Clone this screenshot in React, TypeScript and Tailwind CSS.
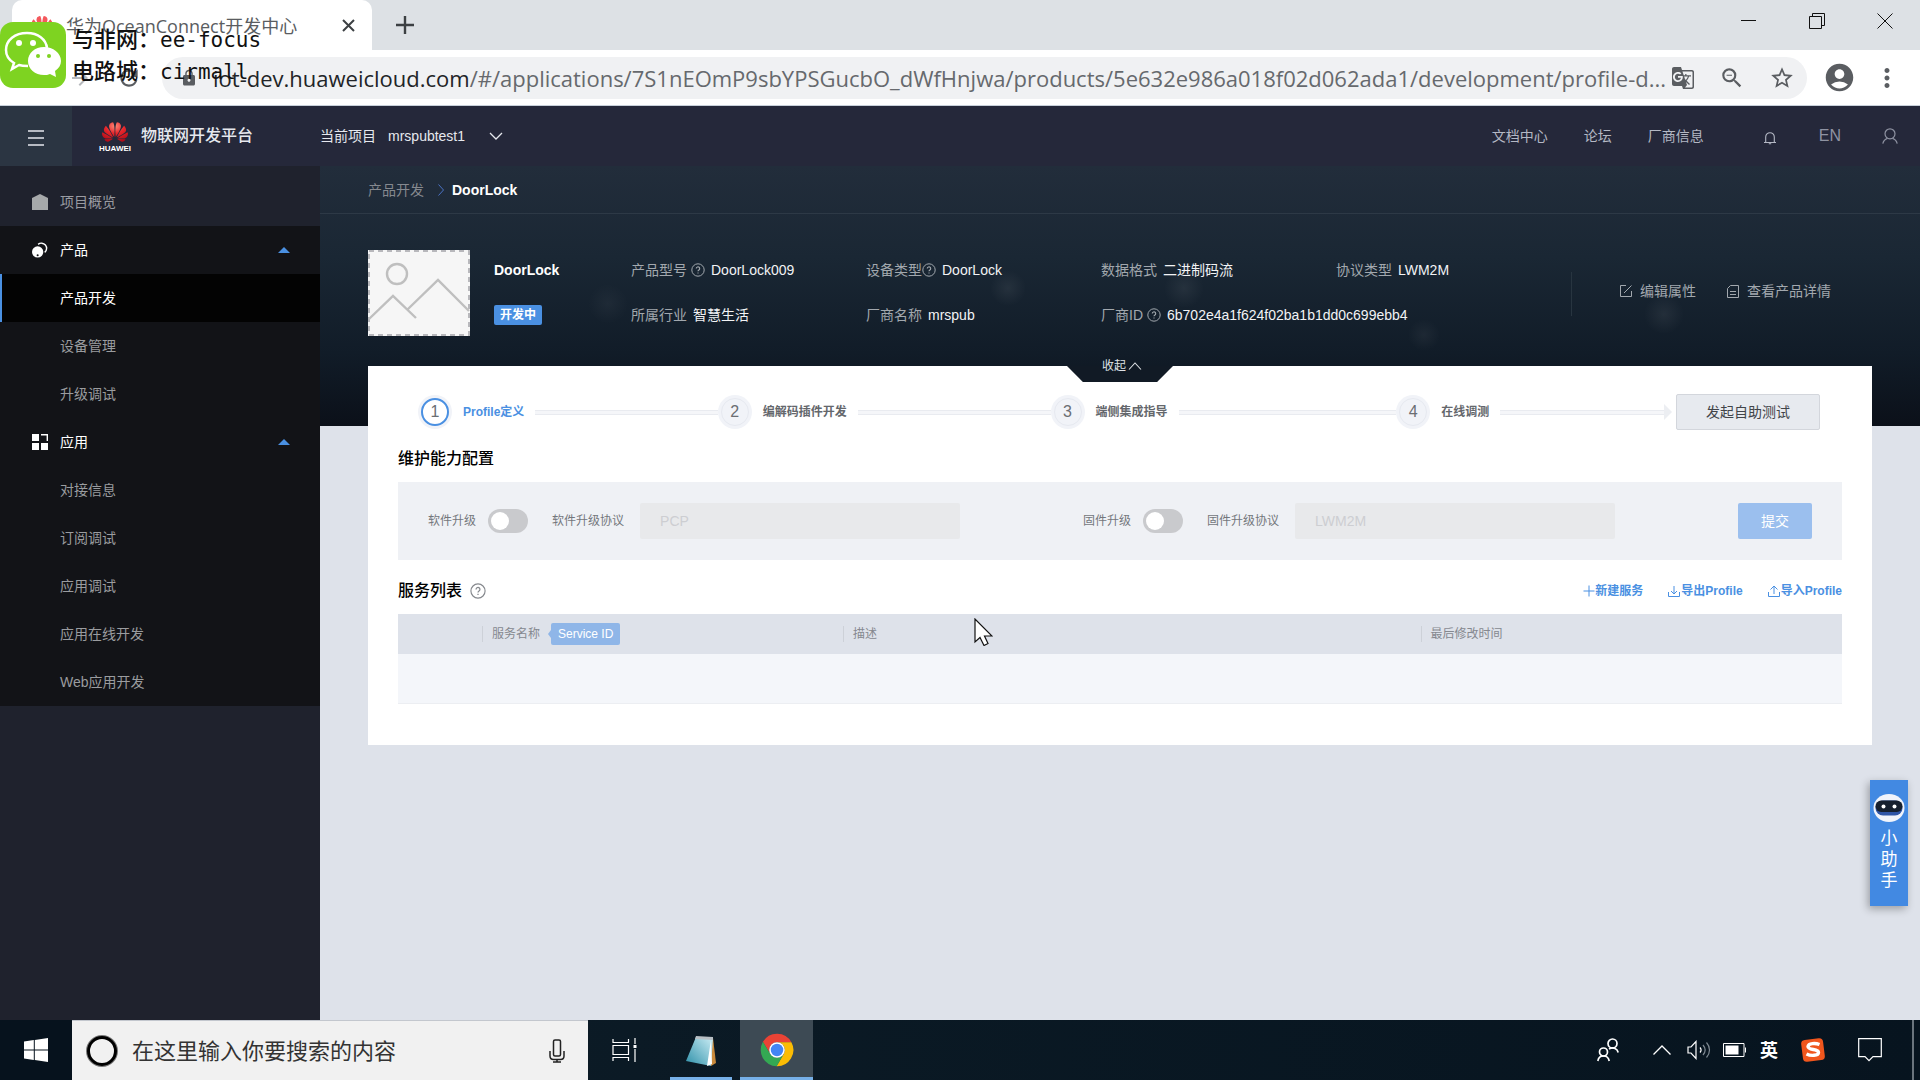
import type { ReactNode } from 'react'
import {
  MdAccountCircle,
  MdArrowForward,
  MdGTranslate,
  MdLock,
  MdMoreVert,
  MdRefresh,
  MdStarBorder,
  MdZoomOut,
} from 'react-icons/md'
import { SiHuawei } from 'react-icons/si'

const LATIN_FONT = "font-['Liberation_Sans','Noto_Sans_CJK_SC',sans-serif]"
const CHROME_FONT = "font-['Open_Sans','Noto_Sans_CJK_SC',sans-serif]"

const PRODUCT_ITEMS = [
  { label: '产品开发', active: true },
  { label: '设备管理' },
  { label: '升级调试' },
]

const APP_ITEMS = [
  { label: '对接信息' },
  { label: '订阅调试' },
  { label: '应用调试' },
  { label: '应用在线开发' },
  { label: 'Web应用开发' },
]

const PRODUCT_INFO = [
  { label: '产品型号', value: 'DoorLock009', help: 'ml-1' },
  { label: '设备类型', value: 'DoorLock', help: 'ml-0' },
  { label: '数据格式', value: '二进制码流' },
  { label: '协议类型', value: 'LWM2M' },
  { label: '所属行业', value: '智慧生活' },
  { label: '厂商名称', value: 'mrspub' },
  { label: '厂商ID', value: '6b702e4a1f624f02ba1b1dd0c699ebb4', help: 'ml-1' },
]

const STEPS = [
  { label: 'Profile定义', grow: 'grow-[300]', active: true },
  { label: '编解码插件开发', grow: 'grow-[333]' },
  { label: '端侧集成指导', grow: 'grow-[346]' },
  { label: '在线调测', grow: 'grow-[280]', last: true },
]

function HelpIcon({ className }: { className: string }) {
  return (
    <svg viewBox="0 0 14 14" fill="none" stroke="currentColor" className={className}>
      <circle cx="7" cy="7" r="6.2" />
      <path d="M5.3 5.6a1.7 1.7 0 1 1 2.6 1.4c-.6.4-.9.7-.9 1.3M7 9.4v1.1" strokeWidth="1.1" />
    </svg>
  )
}

function PetalGradient() {
  return (
    <svg width="0" height="0" className="absolute">
      <defs>
        <radialGradient id="petal" cx="50%" cy="20%" r="80%">
          <stop offset="0" stopColor="#ff8a78" />
          <stop offset="0.45" stopColor="#e8262b" />
          <stop offset="1" stopColor="#b00d18" />
        </radialGradient>
      </defs>
    </svg>
  )
}

/* ---------- browser frame ---------- */

function TabStrip() {
  return (
    <div className="flex h-[50px] justify-between bg-[#dde1e5]">
      <div className="flex items-center pl-3">
        <div className="flex h-full w-[360px] items-center rounded-t-[10px] bg-white pl-[18px] pr-4">
          <SiHuawei className="size-6 shrink-0 text-[#f4585c]" />
          <span className="ml-3 flex-1 whitespace-nowrap pt-0.5 text-lg text-[#5a5d61]">
            华为OceanConnect开发中心
          </span>
          <button aria-label="关闭标签页" className="text-[#3c4043]">
            <svg viewBox="0 0 16 16" className="size-4" stroke="currentColor" strokeWidth="2">
              <path d="M3 3l11 11M14 3L3 14" />
            </svg>
          </button>
        </div>
        <button aria-label="新建标签页" className="ml-6 text-[#3c4043]">
          <svg viewBox="0 0 18 18" className="size-[18px]" stroke="currentColor" strokeWidth="2.4">
            <path d="M9 0v18M0 9h18" />
          </svg>
        </button>
      </div>
      <div className="flex h-[42px] items-center gap-[52px] pr-[27px] text-[#111]">
        <button aria-label="最小化">
          <svg viewBox="0 0 16 16" className="size-4" stroke="currentColor" fill="none">
            <path d="M0 7.5h15" />
          </svg>
        </button>
        <button aria-label="还原">
          <svg viewBox="0 0 16 16" className="size-4" stroke="currentColor" fill="none">
            <path d="M.5 3.5h12v12H.5zM3.5 3.5v-3h12v12h-3" />
          </svg>
        </button>
        <button aria-label="关闭">
          <svg viewBox="0 0 16 16" className="size-4" stroke="currentColor" fill="none">
            <path d="M.5.5l15 15M15.5.5l-15 15" />
          </svg>
        </button>
      </div>
    </div>
  )
}

function AddressBar() {
  return (
    <div className="flex h-14 items-center border-b border-[#c8d0da] bg-white pr-[18px] text-[#5a5d61]">
      <button aria-label="前进" className="ml-[68px] text-[#b5b8bc]">
        <MdArrowForward className="size-6" />
      </button>
      <button aria-label="重新加载" className="ml-6">
        <MdRefresh className="size-[26px]" />
      </button>
      <div className="ml-5 flex h-[42px] min-w-0 flex-1 items-center rounded-full bg-[#f0f1f3] pl-[18px] pr-3">
        <MdLock className="size-[18px] shrink-0" />
        <span className="ml-[15px] min-w-0 flex-1 whitespace-nowrap text-[22px] leading-8 text-[#66696d]">
          <span className="text-[#222427]">iot-dev.huaweicloud.com</span>
          /#/applications/7S1nEOmP9sbYPSGucbO_dWfHnjwa/products/5e632e986a018f02d062ada1/development/profile-d...
        </span>
        <div className="flex shrink-0 items-center gap-[24px]">
          <button aria-label="翻译">
            <MdGTranslate className="size-6" />
          </button>
          <button aria-label="缩放">
            <MdZoomOut className="size-[26px]" />
          </button>
          <button aria-label="收藏">
            <MdStarBorder className="size-[26px]" />
          </button>
        </div>
      </div>
      <button aria-label="用户" className="ml-4">
        <MdAccountCircle className="size-[33px]" />
      </button>
      <button aria-label="更多" className="ml-4">
        <MdMoreVert className="size-[30px]" />
      </button>
    </div>
  )
}

function Watermark() {
  return (
    <div className="absolute left-0 top-[22px] flex items-center gap-1.5 text-[#111]">
      <svg viewBox="0 0 66 66" className="size-[66px]">
        <rect width="66" height="66" rx="13" fill="#7ed321" />
        <path
          d="M27 11C15 11 6 18 6 28c0 6 3 10 8 13l-2 6 7-4c3 1 5 1 9 1"
          fill="none"
          stroke="#fff"
          strokeWidth="2.5"
        />
        <path d="M27 11c11 0 19 6 20 15" fill="none" stroke="#fff" strokeWidth="2.5" />
        <circle cx="19" cy="21" r="3" fill="#fff" />
        <circle cx="33" cy="21" r="3" fill="#fff" />
        <path
          d="M44 25c9 0 17 6 17 14 0 4-2 7-6 10l1 6-6-3c-2 1-4 1-6 1-9 0-16-6-16-14s7-14 16-14z"
          fill="#fff"
        />
        <circle cx="38" cy="34" r="2" fill="#7ed321" />
        <circle cx="49" cy="34" r="2" fill="#7ed321" />
      </svg>
      <div className="font-['Noto_Sans_CJK_SC',sans-serif] text-[22px] font-medium leading-[29px] whitespace-nowrap">
        <p>
          与非网：<span className="font-['DejaVu_Sans_Mono',monospace] text-[21px]">ee-focus</span>
        </p>
        <p>
          电路城：<span className="font-['DejaVu_Sans_Mono',monospace] text-[21px]">cirmall</span>
        </p>
      </div>
    </div>
  )
}

/* ---------- console header and sidebar ---------- */

function ConsoleHeader() {
  return (
    <header className="flex h-[60px] shrink-0 items-center bg-[#25283a] text-sm text-[#e6e8ee]">
      <button
        aria-label="菜单"
        className="flex h-full w-[72px] items-center justify-center bg-[#2b3542]"
      >
        <svg viewBox="0 0 16 16" className="mt-1 size-4" stroke="#e6e8ee" strokeWidth="1.3">
          <path d="M0 1h16M0 8h16M0 15h16" />
        </svg>
      </button>
      <div className="ml-[27px] flex w-8 flex-col items-center">
        <SiHuawei className="h-[26px] w-8" style={{ fill: 'url(#petal)' }} />
        <span className="text-[8px] font-bold leading-2 text-white">HUAWEI</span>
      </div>
      <h1 className="ml-[10px] text-base font-medium">物联网开发平台</h1>
      <span className="ml-[67px]">当前项目</span>
      <button className="ml-3 flex items-center gap-6">
        mrspubtest1
        <svg viewBox="0 0 14 8" className="h-2 w-3.5" fill="none" stroke="currentColor" strokeWidth="1.3">
          <path d="M1 1l6 6 6-6" />
        </svg>
      </button>
      <nav className="ml-auto flex items-center pr-[22px] text-[#b4b8c4]">
        <a href="#docs">文档中心</a>
        <a href="#forum" className="ml-9">论坛</a>
        <a href="#vendor" className="ml-9">厂商信息</a>
        <button aria-label="通知" className="ml-[59px]">
          <svg viewBox="0 0 14 14" className="mt-1 size-3.5" fill="none" stroke="currentColor" strokeWidth="1.1">
            <path d="M1 11.5h12M2.7 11.5V6a4.3 4.3 0 0 1 8.6 0v5.5M5.8 12.8h2.4" />
          </svg>
        </button>
        <button className="ml-[42px] text-base text-[#8f93a2]">EN</button>
        <button aria-label="账号" className="ml-[41px]">
          <svg viewBox="0 0 16 16" className="size-4" fill="none" stroke="#8f93a2" strokeWidth="1.2">
            <circle cx="8" cy="5.8" r="5" />
            <path d="M.8 15.6c.6-2.8 2.4-4.4 4.6-5.2M15.2 15.6c-.6-2.8-2.4-4.4-4.6-5.2" />
          </svg>
        </button>
      </nav>
    </header>
  )
}

function GroupHeading({ icon, label }: { icon: ReactNode; label: string }) {
  return (
    <button className="flex h-12 w-full items-center pl-8 pr-[30px] text-left text-white">
      {icon}
      <span className="ml-3 flex-1">{label}</span>
      <svg viewBox="0 0 12 6" className="h-1.5 w-3" fill="#4a90e2">
        <path d="M6 0l6 6H0z" />
      </svg>
    </button>
  )
}

function MenuLink({ label, active }: { label: string; active?: boolean }) {
  return (
    <a
      href="#menu"
      className={`flex h-12 items-center border-l-2 pl-[58px] ${
        active ? 'border-[#4a90e2] bg-[#030303] text-white' : 'border-transparent text-[#9a9c9f]'
      }`}
    >
      {label}
    </a>
  )
}

function Sidebar() {
  return (
    <aside className="w-80 shrink-0 bg-[#1f222d] pt-3 text-sm">
      <a href="#overview" className="flex h-12 items-center gap-3 pl-8 text-[#9a9ca2]">
        <svg viewBox="0 0 16 16" className="size-4" fill="#a6a9aa">
          <path d="M8 0l8 4v12H0V4z" />
        </svg>
        项目概览
      </a>
      <nav className="bg-[#121317]">
        <GroupHeading
          label="产品"
          icon={
            <svg viewBox="0 0 17 17" className="size-4">
              <path d="M6.500 2.500A5 5 0 1 1 13.500 11" fill="none" stroke="#fff" strokeWidth="1.500" />
              <circle cx="6" cy="10.500" r="6" fill="#fff" />
              <circle cx="6" cy="14" r="1.100" fill="#121317" />
            </svg>
          }
        />
        {PRODUCT_ITEMS.map((item) => (
          <MenuLink key={item.label} {...item} />
        ))}
        <GroupHeading
          label="应用"
          icon={
            <svg viewBox="0 0 16 16" className="size-4" fill="#fff">
              <path d="M0 0h7v7H0zM0 9h7v7H0zM9 9h7v7H9z" />
              <path d="M9 .7h6.3V7" fill="none" stroke="#fff" strokeWidth="1.4" />
            </svg>
          }
        />
        {APP_ITEMS.map((item) => (
          <MenuLink key={item.label} {...item} />
        ))}
      </nav>
    </aside>
  )
}

/* ---------- product page ---------- */

function ProductHero() {
  return (
    <section className="bg-[radial-gradient(circle_at_43%_47%,#ffffff10_0,transparent_18px),radial-gradient(circle_at_54%_47%,#ffffff10_0,transparent_20px),radial-gradient(circle_at_84%_57%,#ffffff10_0,transparent_20px),radial-gradient(circle_at_69%_65%,#ffffff0c_0,transparent_16px),radial-gradient(circle_at_18%_53%,#ffffff0a_0,transparent_20px),linear-gradient(to_bottom,#222d3b_0%,#1a2734_35%,#111c28_72%,#0b1019_100%)] pb-[90px] text-sm">
      <nav className="flex h-12 items-center border-b border-[#2d3946] pl-12">
        <a href="#products" className="text-[#85898f]">产品开发</a>
        <svg viewBox="0 0 6 12" className="ml-3.5 mr-2 h-3 w-1.5" fill="none" stroke="#4a72c4">
          <path d="M.5.5L5.5 6l-5 5.5" />
        </svg>
        <span className="font-bold text-white">DoorLock</span>
      </nav>
      <div className="flex items-start px-12 pt-9">
        <svg viewBox="0 0 102 86" className="h-[86px] w-[102px]" fill="none">
          <path d="M0 0h102v86H0z" fill="#f6f6f6" />
          <path d="M1 1h100v84H1z" stroke="#b8b8bc" strokeWidth="2" strokeDasharray="5 4" />
          <g stroke="#bfbfbf" strokeWidth="2.4">
            <circle cx="29" cy="24" r="10" />
            <path d="M1 69l24-23 23 22M40 59l30-29 31 31" />
          </g>
        </svg>
        <div className="ml-6 w-[137px] shrink-0 pt-2.5">
          <h2 className="font-bold leading-5 text-white">DoorLock</h2>
          <span className="mt-[25px] inline-block rounded-[2px] bg-[#4a90e2] px-1.5 text-xs font-bold leading-5 text-white">
            开发中
          </span>
        </div>
        <dl className="grid grow grid-cols-4 gap-y-[25px] pt-2.5 leading-5">
          {PRODUCT_INFO.map((info) => (
            <div key={info.label} className="flex w-0 items-center whitespace-nowrap">
              <dt className="flex items-center text-[#a2a8ae]">
                {info.label}
                {info.help && (
                  <span className={info.help}>
                    <HelpIcon className="size-3.5" />
                  </span>
                )}
              </dt>
              <dd className="ml-1.5 text-[#f2f3f5]">{info.value}</dd>
            </div>
          ))}
        </dl>
        <div className="mt-[22px] flex h-11 shrink-0 items-center border-l border-[#283540] pb-1.5 pl-12 pr-[41px] text-[#a2a8ae]">
          <button className="flex items-center gap-2">
            <svg viewBox="0 0 12 12" className="size-3" fill="none" stroke="currentColor">
              <path d="M6 .5H.5v11h11V6M4 8l7.5-7.5" />
            </svg>
            编辑属性
          </button>
          <button className="ml-[31px] flex items-center gap-2">
            <svg viewBox="0 0 12 13" className="h-[13px] w-3" fill="none" stroke="currentColor">
              <path d="M3.5.5h8v12H.5v-9zM3 6.5h6M3 9.5h6" />
            </svg>
            查看产品详情
          </button>
        </div>
      </div>
    </section>
  )
}

function Steps() {
  return (
    <div className="flex items-center pl-5 pr-[22px]">
      <ol className="flex grow items-center">
        {STEPS.map((step, i) => (
          <li key={step.label} className={`flex basis-0 items-center ${step.grow}`}>
            <span className="shrink-0 rounded-full bg-[#f1f3f8] p-[3px]">
              <span
                className={`flex size-7 items-center justify-center rounded-full text-base text-[#6b6e73] ${
                  step.active ? 'border-2 border-[#4a90e2] bg-white' : 'border border-[#e6e9f0]'
                }`}
              >
                {i + 1}
              </span>
            </span>
            <span
              className={`mx-[11px] shrink-0 whitespace-nowrap text-xs font-bold ${
                step.active ? 'text-[#4a90e2]' : 'text-[#64676c]'
              }`}
            >
              {step.label}
            </span>
            <span className="h-[5px] grow border-y border-[#e9ebf0] bg-[#f5f6f9]" />
            {step.last && (
              <svg viewBox="0 0 8 16" className="mr-1 h-4 w-2" fill="#eceef2">
                <path d="M0 0l8 8-8 8z" />
              </svg>
            )}
          </li>
        ))}
      </ol>
      <button className="h-9 w-36 rounded-[2px] border border-[#d3d6dc] bg-[#e7eaef] text-sm text-[#414449]">
        发起自助测试
      </button>
    </div>
  )
}

function UpgradeSetting({ id, label, protocol }: { id: string; label: string; protocol: string }) {
  return (
    <div className="flex w-[655px] items-center">
      <label htmlFor={id}>{label}</label>
      <span className="relative ml-3 h-6 w-10">
        <input
          id={id}
          type="checkbox"
          className="peer size-full appearance-none rounded-full bg-[#c9cacd]"
        />
        <span className="pointer-events-none absolute left-[3px] top-[3px] size-[18px] rounded-full bg-white peer-checked:left-[19px]" />
      </span>
      <label htmlFor={`${id}-protocol`} className="ml-6">
        {label}协议
      </label>
      <input
        id={`${id}-protocol`}
        disabled
        value={protocol}
        className="ml-4 h-9 w-80 rounded-[2px] bg-[#e8e9eb] px-5 text-sm text-[#cdced2]"
      />
    </div>
  )
}

function ServiceTable() {
  return (
    <table className="w-full table-fixed text-left text-xs">
      <thead>
        <tr className="h-10 bg-[#dee2ea] text-[#85888f]">
          <th className="w-[84px]" />
          <th className="w-[25%] font-normal">
            <span className="flex items-center">
              <span className="border-l border-[#cdd1d8] pl-[9px]">服务名称</span>
              <svg viewBox="0 0 3 8" className="ml-2 h-2 w-[3px]" fill="#8fb6e8">
                <path d="M3 0v8L0 4z" />
              </svg>
              <span className="rounded-[2px] bg-[#8fb6e8] px-[7px] font-medium leading-[22px] text-white">
                Service ID
              </span>
            </span>
          </th>
          <th className="w-[40%] font-normal">
            <span className="block border-l border-[#cdd1d8] pl-[9px]">描述</span>
          </th>
          <th className="font-normal">
            <span className="block border-l border-[#cdd1d8] pl-[9px]">最后修改时间</span>
          </th>
        </tr>
      </thead>
      <tbody>
        <tr className="h-[49px] border-b border-[#eceef2] bg-[#f4f6fa]">
          <td colSpan={4} />
        </tr>
      </tbody>
    </table>
  )
}

function ProfileCard() {
  return (
    <section className="relative mx-12 -mt-[60px] bg-white px-[30px] pb-[41px] pt-7">
      <button className="absolute left-1/2 top-0 h-4 w-[106px] -translate-x-1/2 bg-[#111a25] text-xs text-[#dfe2e6] [clip-path:polygon(0_-20px,100%_-20px,100%_0,85%_100%,15%_100%,0_0)]">
        <span className="-mt-4 flex items-center justify-center gap-0.5 pl-1">
          收起
          <svg viewBox="0 0 14 8" className="h-2 w-3.5" fill="none" stroke="currentColor" strokeWidth="1.1">
            <path d="M1 7.5L7 1l6 6.5" />
          </svg>
        </span>
      </button>
      <Steps />
      <h3 className="mt-[17px] text-base font-medium leading-6 text-black">维护能力配置</h3>
      <form className="mt-[11px] flex h-[78px] items-center bg-[#eff1f5] px-[30px] text-xs text-[#74777c]">
        <UpgradeSetting id="software" label="软件升级" protocol="PCP" />
        <UpgradeSetting id="firmware" label="固件升级" protocol="LWM2M" />
        <button type="button" className="ml-auto h-9 w-[74px] shrink-0 rounded-[2px] bg-[#9bbfee] text-sm text-white">
          提交
        </button>
      </form>
      <div className="flex h-[54px] items-center pt-2">
        <h3 className="text-base font-medium leading-6 text-black">服务列表</h3>
        <HelpIcon className="ml-2 size-4 text-[#85888d]" />
        <div className="ml-auto flex items-center gap-[25px] text-xs font-bold text-[#4a90e2]">
          <button className="flex items-center">
            <svg viewBox="0 0 12 12" className="size-3" stroke="currentColor">
              <path d="M6 .5v11M.5 6h11" />
            </svg>
            新建服务
          </button>
          <button className="flex items-center gap-px">
            <svg viewBox="0 0 12 12" className="size-3" fill="none" stroke="currentColor">
              <path d="M.5 7v4.500h11V7M6 1v8M3 6l3 3 3-3" />
            </svg>
            导出Profile
          </button>
          <button className="flex items-center gap-px">
            <svg viewBox="0 0 12 12" className="size-3" fill="none" stroke="currentColor">
              <path d="M.5 7v4.500h11V7M6 9V1M2.500 4.500L6 1l3.500 3.500" />
            </svg>
            导入Profile
          </button>
        </div>
      </div>
      <ServiceTable />
    </section>
  )
}

function Assistant() {
  return (
    <button className="absolute bottom-[114px] right-3 flex h-[126px] w-[38px] flex-col items-center bg-[#4289e2] pt-3.5 text-[17px] leading-[21px] text-white shadow-[-2px_3px_8px_rgba(0,0,0,0.3)]">
      <svg viewBox="0 0 32 28" className="mb-1.5 h-7 w-8">
        <ellipse cx="16" cy="14" rx="15.500" ry="14" fill="#f1f4fb" />
        <rect x="2.500" y="6.500" width="27" height="15" rx="7.500" fill="#2f55a6" />
        <rect x="2.500" y="6.500" width="27" height="11.500" rx="5.700" fill="#16202f" />
        <circle cx="10.500" cy="12.500" r="2" fill="#fff" />
        <circle cx="21.500" cy="12.500" r="2" fill="#fff" />
      </svg>
      <span>小</span>
      <span>助</span>
      <span>手</span>
    </button>
  )
}

/* ---------- desktop taskbar ---------- */

function Taskbar() {
  return (
    <footer className={`flex h-[60px] shrink-0 bg-linear-to-r from-[#0d1d28] to-[#07141f] text-white ${CHROME_FONT}`}>
      <button aria-label="开始" className="flex w-[72px] items-center justify-center bg-[#06121d]">
        <svg viewBox="0 0 24 24" className="size-6" fill="#fff">
          <path d="M0 3.400L9.800 2v9.500H0zM10.800 1.900L24 0v11.500H10.800zM0 12.500h9.800V22L0 20.600zM10.800 12.500H24V24l-13.200-1.900z" />
        </svg>
      </button>
      <label className="flex w-[516px] items-center border-t border-[#c3c7ce] bg-[#f1f1f1] pl-3.5 pr-[23px]">
        <svg viewBox="0 0 32 32" className="size-8 shrink-0" fill="none">
          <circle cx="16" cy="16" r="14.500" stroke="#777" strokeWidth="3" />
          <circle cx="16" cy="16" r="13.500" stroke="#000" strokeWidth="3" />
        </svg>
        <input
          aria-label="搜索"
          placeholder="在这里输入你要搜索的内容"
          className="ml-3.5 min-w-0 flex-1 bg-transparent text-[22px] placeholder:text-[#333]"
        />
        <svg viewBox="0 0 16 24" className="h-6 w-4" fill="none" stroke="#222" strokeWidth="1.500">
          <rect x="4.500" y="1" width="7" height="16" rx="1.500" />
          <path d="M1 12v5c0 2 1.500 3.500 3.500 3.500h7c2 0 3.500-1.500 3.500-3.500v-5M8 20.500V23M4 23h8" />
        </svg>
      </label>
      <button aria-label="任务视图" className="flex w-[72px] items-center justify-center">
        <svg viewBox="0 0 25 24" className="h-6 w-[25px]" fill="none" stroke="#fff" strokeWidth="1.200">
          <path d="M1 1v3.500h15.500V1M1 23v-3.500h15.500V23M1 7.500h15.500v9H1zM23 0v6M23 11v13" />
          <path d="M21.500 7h3v3h-3z" fill="#fff" stroke="none" />
        </svg>
      </button>
      <button aria-label="记事本" className="mx-[10px] flex w-[62px] items-center justify-center border-b-[3px] border-[#76b0e8]">
        <svg viewBox="0 0 34 32" className="mt-1 h-8 w-[34px]">
          <defs>
            <linearGradient id="note" x1="0" y1="1" x2="1" y2="0">
              <stop offset="0" stopColor="#2c8fa8" />
              <stop offset="1" stopColor="#cdeef6" />
            </linearGradient>
          </defs>
          <path d="M29 3l3 25-5 3-2-27z" fill="#c98a3c" />
          <path d="M12 2l17 1-2 28-25-5z" fill="url(#note)" />
          <path d="M27 5l1 24-5 2z" fill="#fff" />
          <path d="M12 1l17 1v3L11 4z" fill="#b8bfc4" />
        </svg>
      </button>
      <button aria-label="Chrome" className="-ml-[2px] flex w-[73px] items-center justify-center border-b-[3px] border-[#76b0e8] bg-[#3d4a54]">
        <svg viewBox="0 0 48 48" className="mt-0.5 size-[34px]">
          <path d="M24 13h20.300A23 23 0 0 0 4.100 12.500L14.500 29.500A11 11 0 0 1 24 13z" fill="#ea4335" />
          <path d="M33.500 29.500L23.400 47A23 23 0 0 0 44.300 13H24a11 11 0 0 1 9.500 16.500z" fill="#fbbc04" />
          <path d="M14.500 29.500L4.100 12.500A23 23 0 0 0 23.400 47l10.100-17.500a11 11 0 0 1-19 0z" fill="#34a853" />
          <circle cx="24" cy="24" r="11" fill="#fff" />
          <circle cx="24" cy="24" r="8.800" fill="#4285f4" />
        </svg>
      </button>
      <div className="ml-auto flex items-center">
        <svg viewBox="0 0 22 24" className="mr-[34px] h-6 w-[22px]" fill="none" stroke="#fff" strokeWidth="1.700">
          <circle cx="15.500" cy="5.500" r="4.500" />
          <circle cx="6.500" cy="14" r="4" />
          <path d="M.800 23c.500-3 2.700-5 5.700-5s5.200 2 5.700 5M12 11c4.500-2.500 8.500 0 9.200 3.500" />
        </svg>
        <svg viewBox="0 0 18 10" className="mr-4 h-2.5 w-[18px]" fill="none" stroke="#fff" strokeWidth="1.300">
          <path d="M.500 9.500L9 1l8.500 8.500" />
        </svg>
        <svg viewBox="0 0 24 20" className="mr-3 h-5 w-6" fill="none" stroke="#fff" strokeWidth="1.200">
          <path d="M1 7h3l5-5.500v17L4 13H1zM13 7.500c1.300 1.500 1.300 3.500 0 5" />
          <path d="M16 5c2.600 3 2.600 7 0 10M19.500 2.500c4 4.500 4 10.500 0 15" stroke="#7d8790" />
        </svg>
        <svg viewBox="0 0 23 14" className="mr-3.5 h-3.5 w-[23px]" fill="none" stroke="#fff">
          <path d="M.500.500h20.500v13H.500zM22.500 4.500v5" />
          <path d="M2.500 2.500h13v9h-13z" fill="#fff" stroke="none" />
        </svg>
        <span className="text-lg font-bold">英</span>
        <svg viewBox="0 0 24 24" className="ml-[23px] size-6">
          <rect x="1" y="1" width="22" height="22" rx="4" fill="#f0561d" transform="rotate(-7 12 12)" />
          <path
            d="M18.500 6.500c-4-1.500-11-1.500-11.500 2 0 4 10.500 2 10.500 6 0 3.500-8 3.500-12 1.500"
            fill="none"
            stroke="#fff"
            strokeWidth="3.400"
          />
        </svg>
        <svg viewBox="0 0 24 24" className="ml-[33px] size-6" fill="none" stroke="#fff" strokeWidth="1.200">
          <path d="M.700.700h22.600v18H15l-4 4-4-4H.700z" />
        </svg>
        <span className="ml-[30px] mr-1.5 h-[60px] w-0.5 bg-[#6a747d]" />
      </div>
    </footer>
  )
}

export default function App() {
  return (
    <div className={`relative flex min-h-screen flex-col overflow-hidden ${LATIN_FONT}`}>
      <PetalGradient />
      <div className={CHROME_FONT}>
        <TabStrip />
        <AddressBar />
      </div>
      <ConsoleHeader />
      <div className="relative flex flex-1">
        <Sidebar />
        <main className="min-w-0 flex-1 bg-[#dee2ea]">
          <ProductHero />
          <ProfileCard />
        </main>
        <Assistant />
      </div>
      <Taskbar />
      <Watermark />
      <svg viewBox="0 0 19 28" className="absolute left-[974px] top-[618px] h-7 w-[19px]">
        <path
          d="M1 1v23l5-4.500 4 8 4-2-3.500-7.500H18z"
          fill="#fff"
          stroke="#111"
          strokeWidth="1.200"
        />
      </svg>
    </div>
  )
}
